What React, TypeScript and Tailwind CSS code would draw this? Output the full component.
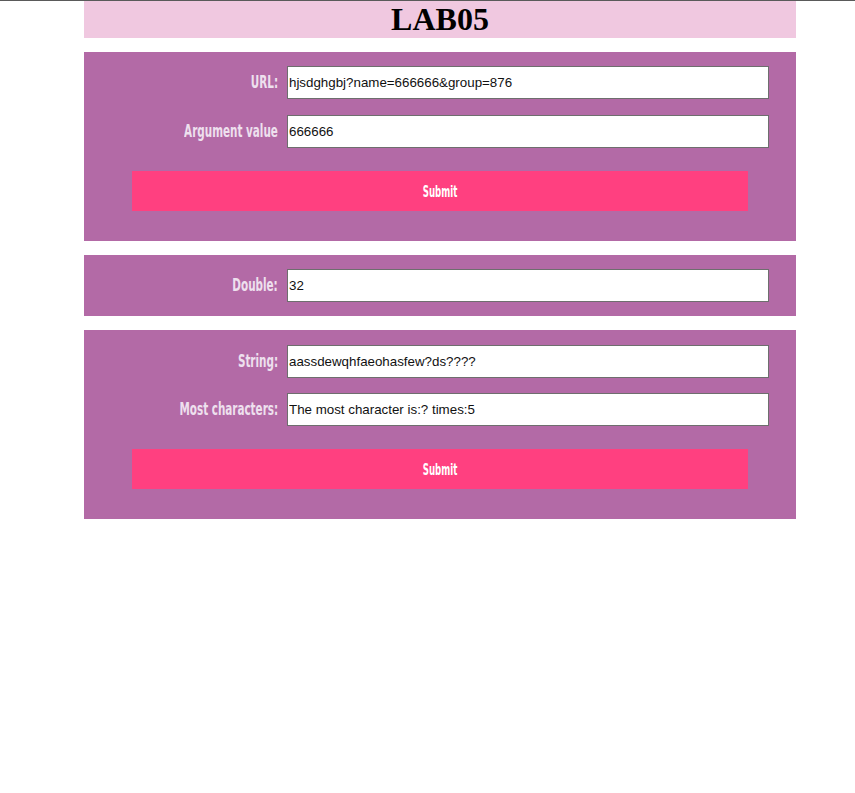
export default function App() {
  return (
    <div className="min-h-[793px] bg-white border-t border-[#5a5a5a]">
      <div className="ml-[84px] w-[712px] flex flex-col gap-[14px]">
        <h1 className="h-[37px] bg-[#f0c8e0] text-center font-['Liberation_Serif',serif] text-[32px] font-bold leading-[37px] text-black">
          LAB05
        </h1>

        <form className="bg-[#b36aa6] pt-[14px] pb-[30px] flex flex-col">
          <Row label="URL:" value="hjsdghgbj?name=666666&group=876" />
          <div className="h-4" />
          <Row label="Argument value" value="666666" />
          <SubmitButton />
        </form>

        <div className="bg-[#b36aa6] py-[14px]">
          <Row label="Double:" value="32" />
        </div>

        <form className="bg-[#b36aa6] pt-[15px] pb-[30px] flex flex-col">
          <Row label="String:" value="aassdewqhfaeohasfew?ds????" />
          <div className="h-[15px]" />
          <Row label="Most characters:" value="The most character is:? times:5" />
          <SubmitButton />
        </form>
      </div>
    </div>
  );
}

function Row({ label, value }: { label: string; value: string }) {
  return (
    <div className="flex items-center">
      <label className="w-[194px] text-right whitespace-nowrap leading-none">
        <span className="inline-block origin-right scale-x-[0.68] font-['DejaVu_Sans_Condensed','DejaVu_Sans',sans-serif] font-stretch-condensed text-[17px] font-bold text-[#eee0ee]">
          {label}
        </span>
      </label>
      <input
        readOnly
        value={value}
        className="ml-[9px] w-[482px] h-[33px] border border-[#6e6e6e] bg-white px-[1px] font-['Liberation_Sans',Arial,sans-serif] text-[13.33px] text-[#111] outline-none"
      />
    </div>
  );
}

function SubmitButton() {
  return (
    <button
      type="button"
      className="mt-[23px] ml-[48px] w-[616px] h-[40px] bg-[#ff4080] text-white leading-none"
    >
      <span className="inline-block scale-x-[0.64] font-['DejaVu_Sans_Condensed','DejaVu_Sans',sans-serif] font-stretch-condensed text-[15px] font-bold">
        Submit
      </span>
    </button>
  );
}
